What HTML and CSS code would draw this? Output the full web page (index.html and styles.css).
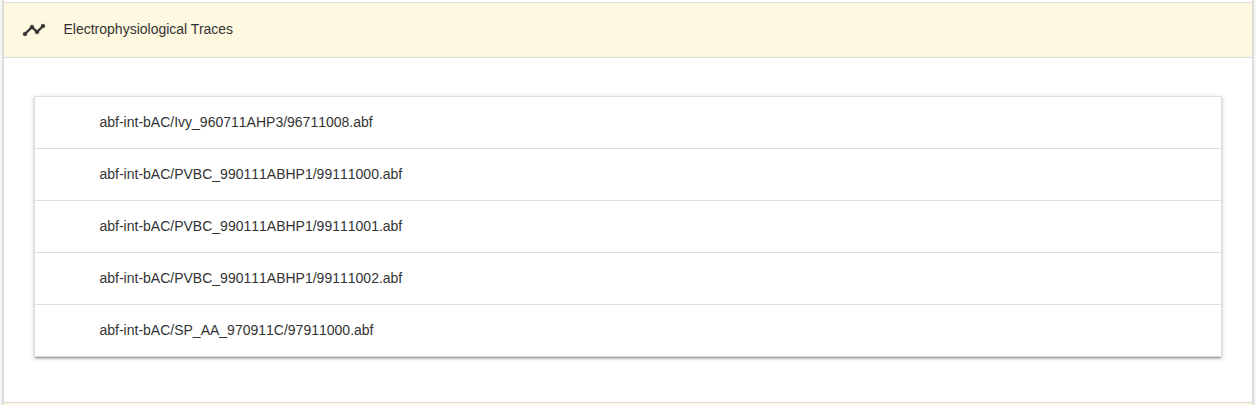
FILE: index.html
```html
<!DOCTYPE html>
<html lang="en">
<head>
<meta charset="utf-8">
<title>Electrophysiological Traces</title>
<link rel="stylesheet" href="styles.css">
</head>
<body>
<main class="collapsible">
  <header class="panel-header">
    <svg class="icon" viewBox="0 0 24 24"><path d="M23 8c0 1.1-.9 2-2 2-.18 0-.35-.02-.51-.07l-3.56 3.55c.05.16.07.34.07.52 0 1.1-.9 2-2 2s-2-.9-2-2c0-.18.02-.36.07-.52l-2.55-2.55c-.16.05-.34.07-.52.07s-.36-.02-.52-.07l-4.55 4.56c.05.16.07.33.07.51 0 1.1-.9 2-2 2s-2-.9-2-2 .9-2 2-2c.18 0 .35.02.51.07l4.56-4.55C8.02 9.36 8 9.18 8 9c0-1.1.9-2 2-2s2 .9 2 2c0 .18-.02.36-.07.52l2.55 2.55c.16-.05.34-.07.52-.07s.36.02.52.07l3.55-3.56C19.02 8.35 19 8.18 19 8c0-1.1.9-2 2-2s2 .9 2 2z"/></svg>
    <span class="title">Electrophysiological Traces</span>
  </header>
  <section class="panel-body">
    <ul class="traces">
      <li>abf-int-bAC/Ivy_960711AHP3/96711008.abf</li>
      <li>abf-int-bAC/PVBC_990111ABHP1/99111000.abf</li>
      <li>abf-int-bAC/PVBC_990111ABHP1/99111001.abf</li>
      <li>abf-int-bAC/PVBC_990111ABHP1/99111002.abf</li>
      <li>abf-int-bAC/SP_AA_970911C/97911000.abf</li>
    </ul>
  </section>
  <div class="next-header"></div>
</main>
</body>
</html>
```
FILE: styles.css
```css
* { box-sizing: border-box; }
body {
  margin: 0;
  height: 405px;
  overflow: hidden;
  background: #fff;
  color: #333;
  font: 14px/21px "Liberation Sans", Arial, sans-serif;
}
.collapsible {
  height: 405px;
  margin: 0 3px;
  padding-top: 2px;
  border: solid #ddd;
  border-width: 0 1px;
  box-shadow: 0 0 0 1px #ddd, 0 0 4px 1px rgba(0,0,0,.14);
}
.panel-header {
  display: flex;
  align-items: center;
  height: 56px;
  padding: 0 0 1px 17.6px;
  background: #fff8e1;
  border: solid #ddd;
  border-width: 1px 0;
}
.icon { width: 24px; height: 24px; margin: 1px 17.9px 0 0; fill: #333; stroke: #333; stroke-width: .3; }
.title { margin-top: -1px; }
.panel-body { height: 344px; padding: 38px 30px 0; }
.traces {
  list-style: none;
  margin: 0;
  padding: 0;
  border: 1px solid #ddd;
  border-bottom: 0;
  box-shadow: 0 2px 2px 0 rgba(0,0,0,.14), 0 1px 5px 0 rgba(0,0,0,.16), 0 3px 1px -2px rgba(0,0,0,.2);
}
.traces li {
  height: 52px;
  padding: 15px 0 0 64.5px;
  border-bottom: 1px solid #ddd;
  font-kerning: none;
}
.next-header { height: 3px; border-top: 1px solid #ddd; background: #fff8e1; }
```
